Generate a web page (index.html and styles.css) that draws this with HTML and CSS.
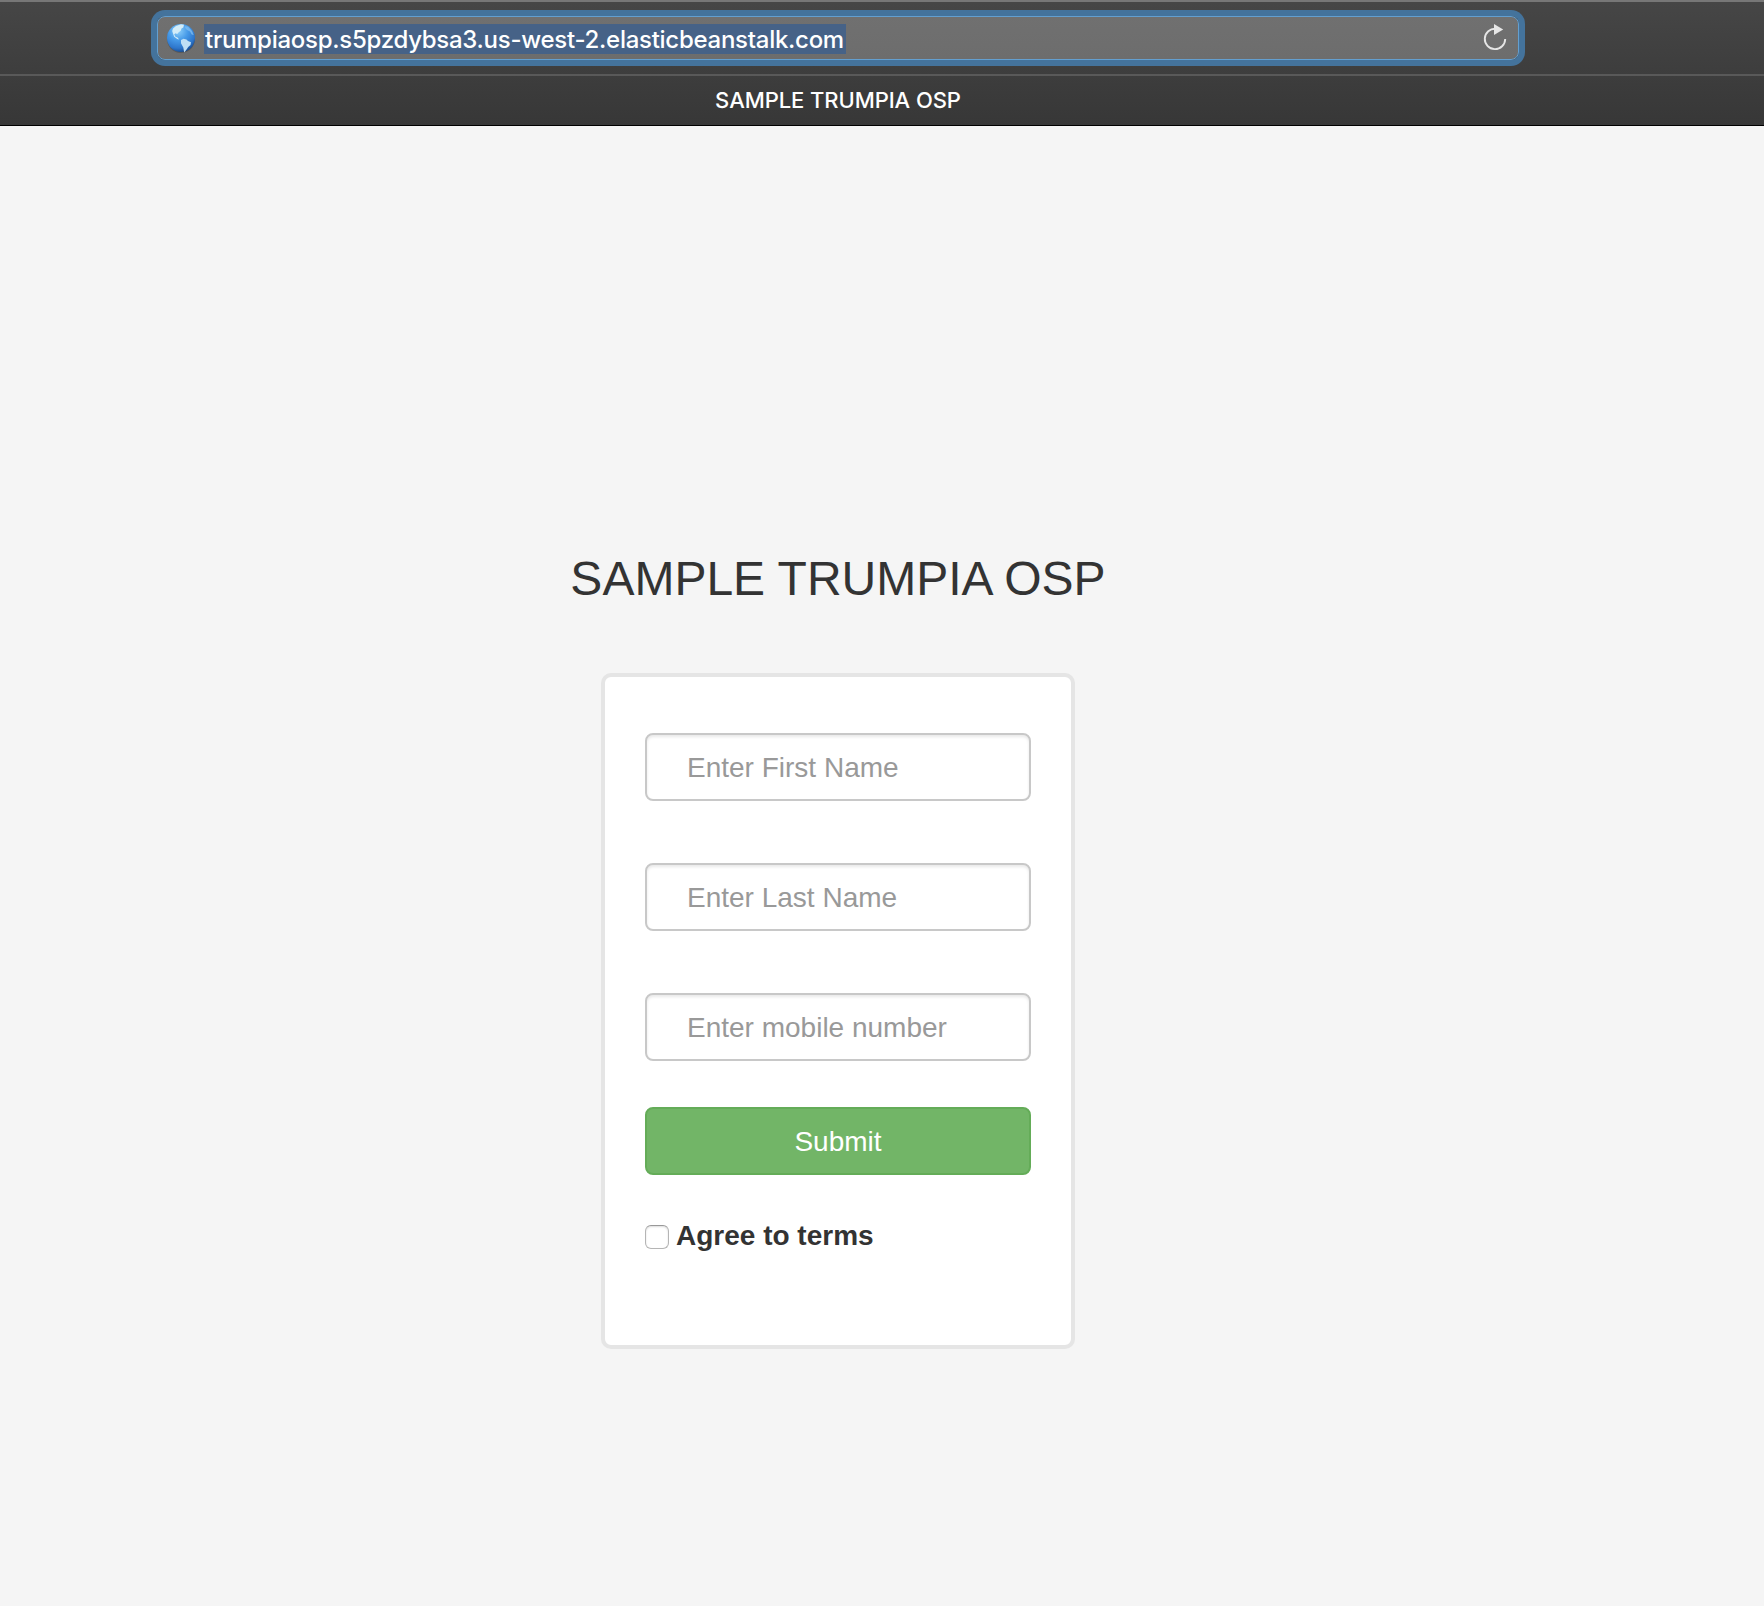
FILE: index.html
```html
<!DOCTYPE html>
<html lang="en">
<head>
<meta charset="utf-8">
<title>SAMPLE TRUMPIA OSP</title>
<link rel="stylesheet" href="styles.css">
</head>
<body>
<header class="chrome">
  <div class="toolbar">
    <div class="address">
      <svg class="globe" viewBox="0 0 30 30" width="30" height="30">
        <defs>
          <radialGradient id="sea" cx="40%" cy="24%" r="78%">
            <stop offset="0" stop-color="#8fd0fa"/>
            <stop offset=".45" stop-color="#4599e8"/>
            <stop offset=".8" stop-color="#2e76cb"/>
            <stop offset="1" stop-color="#174b91"/>
          </radialGradient>
        </defs>
        <ellipse cx="15" cy="16" rx="14" ry="14" fill="#333" opacity=".35"/>
        <circle cx="15" cy="15" r="14" fill="url(#sea)"/>
        <path d="M7 5.500 10 3l5-1.700 3 .5-.7 2.600-1.800 1-.8 2.300-2 1.500-1.500 1.800-1.800-.8-1.200 1.200 1.300 2.400 2 .8 1.700 1.800-2-.3-3-2.300L7 10.500 6.200 8z" fill="#d3ecf8"/>
        <path d="M19 3.200 22 3.500 26 8l1.700 4-2-.5-1.700-3-3-1.500-1.800-2z" fill="#7fbdf0" opacity=".8"/>
        <path d="m15 17 2.500-1.200 3 .7 1.500 1.600 3 1.200-.5 2.800-2.300 1.800-1.500 2.300-2.500 3.300-.9-5-2.300-4.200z" fill="#bfdff5"/>
      </svg>
      <span class="url">trumpiaosp.s5pzdybsa3.us-west-2.elasticbeanstalk.com</span>
      <svg class="reload" viewBox="0 0 26 30" width="26" height="30">
        <path d="M23.200 15a10.200 10.200 0 1 1-9.400-10.200" fill="none" stroke="#e6e6e6" stroke-width="1.900"/>
        <path d="M12 0l9.200 5.500L12 11z" fill="#e6e6e6"/>
      </svg>
    </div>
  </div>
  <div class="tab"><span class="tab-title">SAMPLE TRUMPIA OSP</span></div>
</header>
<main class="page">
  <h1 class="heading">SAMPLE TRUMPIA OSP</h1>
  <form class="card">
    <input class="field" type="text" placeholder="Enter First Name">
    <input class="field" type="text" placeholder="Enter Last Name">
    <input class="field" type="text" placeholder="Enter mobile number">
    <button class="submit" type="button">Submit</button>
    <label class="terms"><input class="check" type="checkbox"><span>Agree to terms</span></label>
  </form>
</main>
</body>
</html>
```
FILE: styles.css
```css
* { box-sizing: border-box; }
body {
  margin: 0;
  height: 1606px;
  overflow: hidden;
  background: #f5f5f5;
  color: #333;
  font-family: "Liberation Sans", Arial, sans-serif;
}
.chrome {
  height: 126px;
  padding-right: 88px;
  border-top: 2px solid #777;
  border-bottom: 1px solid #000;
  background: linear-gradient(#464646, #373737);
  color: #fff;
  font-family: Inter, sans-serif;
  font-weight: 500;
}
.toolbar {
  height: 74px;
  margin-right: -88px;
  padding: 14px 0 0 157px;
  border-bottom: 2px solid #595959;
}
.address {
  display: flex;
  align-items: center;
  width: 1362px;
  height: 44px;
  padding: 0 10px 0 8px;
  border: 1px solid #639fd0;
  border-radius: 8px;
  background: linear-gradient(#707070, #6d6d6d);
  box-shadow: 0 0 0 6px #44739c;
}
.url {
  height: 30px;
  width: 642px;
  margin: 2px auto 0 8px;
  padding-left: 1px;
  background: #466287;
  font-size: 24px;
  letter-spacing: -.27px;
  line-height: 31px;
  white-space: nowrap;
}
.reload { margin-top: 2px; }
.tab {
  height: 49px;
  text-align: center;
  font-size: 22px;
  letter-spacing: -.08px;
  line-height: 49px;
}
.page {
  display: flex;
  flex-direction: column;
  align-items: center;
  padding: 426px 88px 0 0;
}
.heading {
  margin: 0 0 67px;
  font-size: 48px;
  font-weight: 400;
  line-height: 54px;
}
.card {
  display: flex;
  flex-direction: column;
  width: 474px;
  height: 676px;
  padding: 56px 40px 0;
  border: 4px solid #e5e5e5;
  border-radius: 10px;
  background: #fff;
}
.field {
  height: 68px;
  margin: 0 0 62px;
  padding: 2px 40px 0;
  border: 2px solid #c8c8c8;
  border-radius: 8px;
  background: #fff;
  box-shadow: inset 0 2px 3px rgba(0, 0, 0, .09);
  font: 28px "Liberation Sans", Arial, sans-serif;
}
.field::placeholder { color: #999; }
.submit {
  height: 68px;
  margin-top: -16px;
  padding: 2px 0 0;
  border: 2px solid #64ac58;
  border-radius: 8px;
  background: #72b567;
  color: #fff;
  font: 28px "Liberation Sans", Arial, sans-serif;
}
.terms {
  display: flex;
  gap: 7px;
  margin-top: 45px;
  font-size: 28px;
  font-weight: 700;
  line-height: 32px;
}
.check {
  appearance: none;
  width: 24px;
  height: 24px;
  margin: 5px 0 0;
  border: 1px solid #b5b5b5;
  border-top-color: #999;
  border-radius: 6px;
  background: #fff;
  box-shadow: inset 0 1px 2px rgba(0, 0, 0, .14);
}
```
